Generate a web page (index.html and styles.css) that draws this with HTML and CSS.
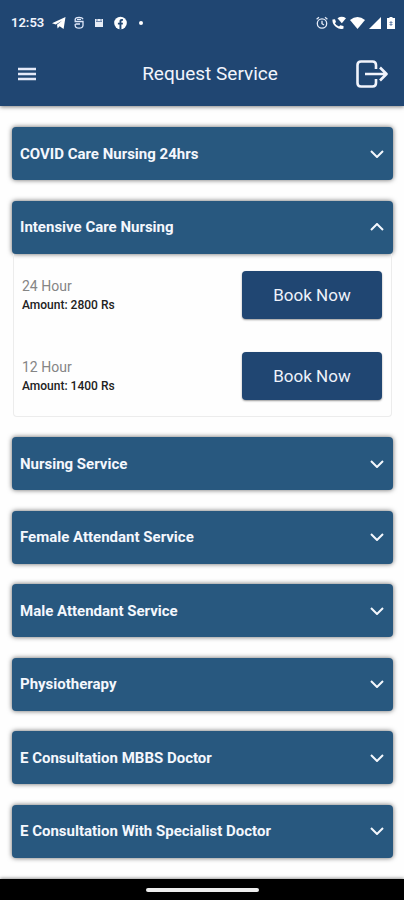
FILE: index.html
```html
<!DOCTYPE html>
<html lang="en">
<head>
<meta charset="utf-8">
<meta name="viewport" content="width=device-width, initial-scale=1">
<title>Request Service</title>
<link rel="stylesheet" href="styles.css">
</head>
<body>
<header class="top">
  <div class="status">
    <div class="status-left">
      <span class="clock">12:53</span>
      <svg width="14" height="14" viewBox="0 0 14 14"><path fill="#fff" d="M0 7.2 13.5 1 11.6 13 7.6 10.2 5.6 12.4 5 8.8 10.2 4.4 3.8 8.4Z"/></svg>
      <svg width="10" height="14" viewBox="0 0 10 14" fill="none" stroke="#dfe8fa" stroke-width="1.3"><path d="M9 3.2C8 .7 2 .7 1.200 3.200V5.500H9V9.500C8.500 13 1.500 13 1.200 9.500V8M3 3.300H7M1.500 8H6"/></svg>
      <svg class="box-icon" width="8" height="9" viewBox="0 0 8 9"><path fill="#e8edf6" d="M0 1H8V9H0Z"/><path stroke="#6d87ad" d="M1 3.500H7M2 1V3M6 1V3"/></svg>
      <svg width="13" height="14" viewBox="0 0 13 14"><circle cx="6.500" cy="7" r="6.300" fill="#fff"/><path fill="#204672" d="M5.500 13.300V8.500H3.900V6.700H5.500V5.400C5.500 3.500 6.700 2.800 9 3.200V4.800C7.800 4.700 7.400 4.900 7.400 5.800V6.700H9L8.700 8.500H7.400V13.300Z"/></svg>
      <span class="dot"></span>
    </div>
    <div class="status-right">
      <svg width="12" height="14" viewBox="0 0 12 14" fill="none" stroke="#e6ecf8" stroke-width="1.300"><circle cx="6" cy="7.500" r="4.700"/><path d="M6 4.800V7.700L8 9M.6 3.200 3 1.300M11.400 3.200 9 1.300"/></svg>
      <svg width="14" height="14" viewBox="0 0 14 14" fill="#fff"><path d="M5.500 2.200Q9.700-.6 14 2.200L9.800 7.200Z"/><path d="M.5 3.500 3 3.300 4 6 2.900 7.200Q4.300 9.800 7 10.500L8.300 9.300 11.500 10V12.500Q8 14.200 4 11Q0 7.600.5 3.500Z"/></svg>
      <svg width="15" height="14" viewBox="0 0 15 14"><path fill="#fff" d="M0 4Q7.500-2 15 4L7.500 13Z"/></svg>
      <svg width="12" height="14" viewBox="0 0 12 14"><path fill="#fff" d="M12 1V13H0Z"/></svg>
      <svg class="battery" width="8" height="14" viewBox="0 0 8 14"><path fill="#fff" d="M2.500 1H5.500V2H8V13H0V2H2.500Z"/><path stroke="#6d87ad" d="M4 5V10M2.500 6.500H5.500M2.500 8.500H5.500"/></svg>
    </div>
  </div>
  <div class="bar">
    <button class="icon-btn" type="button" aria-label="Menu">
      <svg width="18" height="14" viewBox="0 0 18 14"><path stroke="#e4e9f8" stroke-width="2.400" d="M0 2H18M0 7H18M0 12H18"/></svg>
    </button>
    <h1>Request Service</h1>
    <button class="icon-btn" type="button" aria-label="Log out">
      <svg width="32" height="28" viewBox="0 0 32 28" fill="none" stroke="#f1f4fc" stroke-width="2.600" stroke-linejoin="round"><path d="M20 9V5Q20 1.500 16.500 1.500H5Q1.500 1.500 1.500 5V23Q1.500 26.500 5 26.500H16.500Q20 26.500 20 23V19M9 14H30M24 7.500 30.500 14 24 20.500"/></svg>
    </button>
  </div>
</header>
<main class="list">
  <section><button class="card" type="button" aria-expanded="false">COVID Care Nursing 24hrs<svg class="chevron" viewBox="0 0 14 8"><path d="M1 1 7 7 13 1"/></svg></button></section>
  <section>
    <button class="card" type="button" aria-expanded="true">Intensive Care Nursing<svg class="chevron" viewBox="0 0 14 8"><path d="M1 7 7 1 13 7"/></svg></button>
    <div class="panel">
      <div class="offer">
        <div><p class="hours">24 Hour</p><p class="amount">Amount: 2800 Rs</p></div>
        <button class="book" type="button">Book Now</button>
      </div>
      <div class="offer">
        <div><p class="hours">12 Hour</p><p class="amount">Amount: 1400 Rs</p></div>
        <button class="book" type="button">Book Now</button>
      </div>
    </div>
  </section>
  <section><button class="card" type="button" aria-expanded="false">Nursing Service<svg class="chevron" viewBox="0 0 14 8"><path d="M1 1 7 7 13 1"/></svg></button></section>
  <section><button class="card" type="button" aria-expanded="false">Female Attendant Service<svg class="chevron" viewBox="0 0 14 8"><path d="M1 1 7 7 13 1"/></svg></button></section>
  <section><button class="card" type="button" aria-expanded="false">Male Attendant Service<svg class="chevron" viewBox="0 0 14 8"><path d="M1 1 7 7 13 1"/></svg></button></section>
  <section><button class="card" type="button" aria-expanded="false">Physiotherapy<svg class="chevron" viewBox="0 0 14 8"><path d="M1 1 7 7 13 1"/></svg></button></section>
  <section><button class="card" type="button" aria-expanded="false">E Consultation MBBS Doctor<svg class="chevron" viewBox="0 0 14 8"><path d="M1 1 7 7 13 1"/></svg></button></section>
  <section><button class="card" type="button" aria-expanded="false">E Consultation With Specialist Doctor<svg class="chevron" viewBox="0 0 14 8"><path d="M1 1 7 7 13 1"/></svg></button></section>
</main>
<footer class="system-nav"><span class="handle"></span></footer>
</body>
</html>
```
FILE: styles.css
```css
* {
  box-sizing: border-box;
}

body {
  margin: 0;
  min-height: 100vh;
  display: flex;
  flex-direction: column;
  background: #fefefe;
  font-family: Roboto, "Liberation Sans", sans-serif;
}

h1,
p {
  margin: 0;
}

button {
  border: 0;
  font-family: inherit;
  cursor: pointer;
}

svg {
  display: block;
  flex: none;
}

.top {
  background: #204672;
  color: #f1f4fc;
  box-shadow: 0 1px 4px rgba(0, 0, 0, 0.5);
}

.status {
  display: flex;
  justify-content: space-between;
  align-items: center;
  height: 45px;
  padding: 0 9px 0 11px;
}

.status-left {
  display: flex;
  align-items: center;
  gap: 8px;
}

.status-right {
  display: flex;
  align-items: center;
  gap: 4px;
}

.clock {
  font-size: 13px;
  font-weight: 600;
  line-height: 16px;
}

.box-icon {
  margin: 0 3px;
}

.battery {
  margin-left: 2px;
}

.dot {
  width: 4px;
  height: 4px;
  margin-left: 4px;
  border-radius: 50%;
  background: #fff;
}

.bar {
  display: grid;
  grid-template-columns: 32px 1fr 32px;
  align-items: center;
  height: 61px;
  padding: 0 16px 4px 18px;
}

.bar h1 {
  font-size: 19px;
  font-weight: 400;
  line-height: 24px;
  text-align: center;
  padding-left: 14px;
}

.icon-btn {
  display: flex;
  padding: 0;
  background: none;
}

.list {
  flex: 1;
  display: flex;
  flex-direction: column;
  justify-content: space-between;
  gap: 16px;
  padding: 21px 11px 21px 12px;
}

.card {
  display: flex;
  justify-content: space-between;
  align-items: center;
  width: 100%;
  height: 53px;
  padding: 0 9px 0 8px;
  border-radius: 4px;
  background: #28587f;
  box-shadow: 0 0 5px rgba(0, 0, 0, 0.6);
  color: #f4f7fd;
  font-size: 15px;
  font-weight: 700;
  text-align: left;
}

.chevron {
  width: 14px;
  height: 8px;
  fill: none;
  stroke: #f4f7fd;
  stroke-width: 2;
}

.panel {
  margin: 0 1px;
  border: 1px solid #ececec;
  border-top: 0;
  border-radius: 0 0 4px 4px;
}

.offer {
  display: flex;
  justify-content: space-between;
  align-items: center;
  height: 81px;
  padding: 2px 9px 0 8px;
}

.hours {
  color: #858585;
  font-size: 14px;
  font-weight: 400;
  line-height: 20px;
}

.amount {
  color: #222;
  font-size: 12px;
  font-weight: 500;
  line-height: 18px;
}

.book {
  width: 140px;
  height: 48px;
  border-radius: 4px;
  background: #204672;
  box-shadow: 0 1px 2px rgba(0, 0, 0, 0.4);
  color: #eef2fa;
  font-size: 17px;
}

.system-nav {
  display: flex;
  justify-content: center;
  align-items: center;
  height: 21px;
  background: #000;
  box-shadow: 0 -1px 3px rgba(0, 0, 0, 0.4);
}

.handle {
  width: 113px;
  height: 4px;
  border-radius: 2px;
  background: #eee;
}
```
